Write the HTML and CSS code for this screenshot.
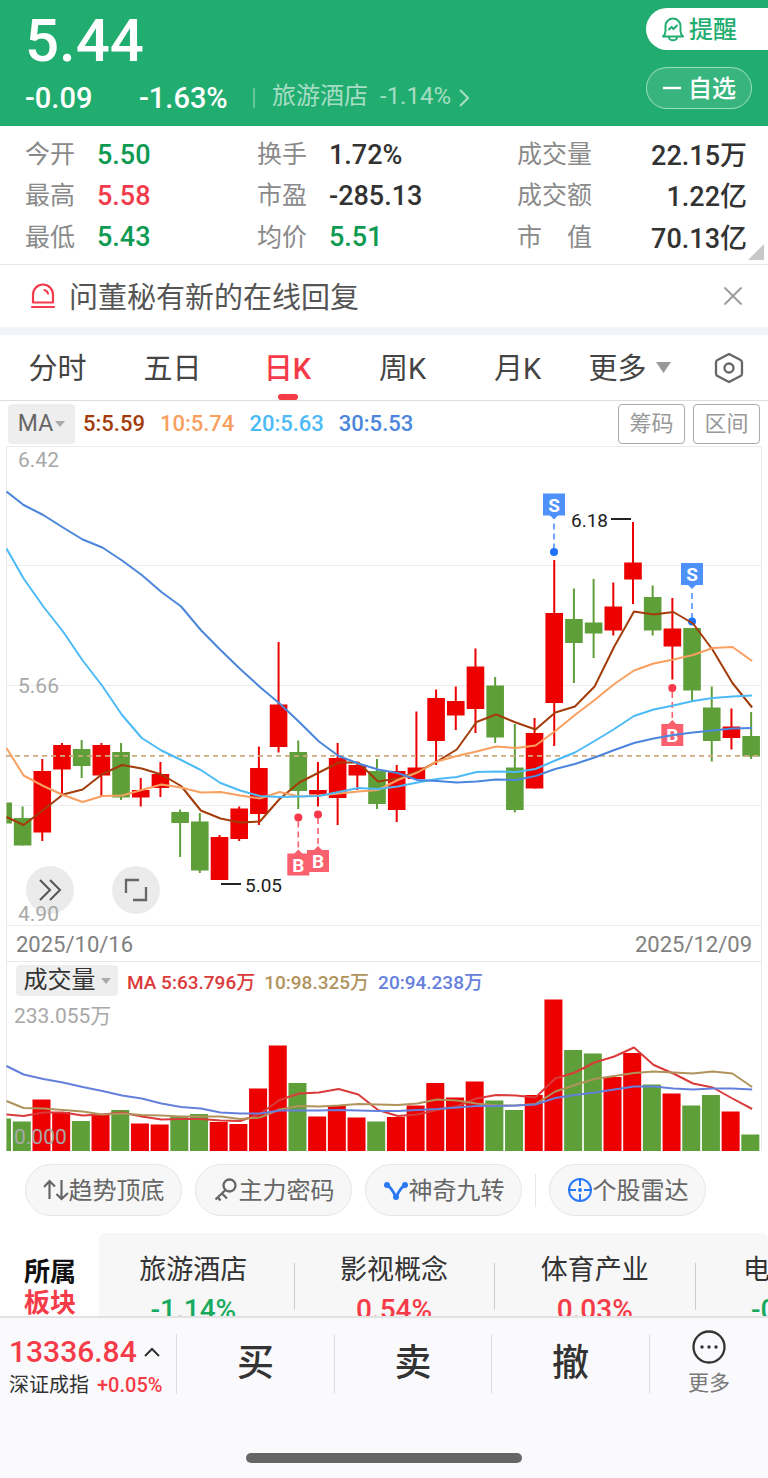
FILE: index.html
```html
<!DOCTYPE html>
<html lang="zh-CN">
<head>
<meta charset="utf-8">
<meta name="viewport" content="width=device-width, initial-scale=1">
<title>个股行情</title>
<link rel="stylesheet" href="styles.css">
</head>
<body>
<div class="app">
  <header class="quote">
    <div class="quote-main">
      <h1 class="price">5.44</h1>
      <div class="changes">
        <span class="change">-0.09</span>
        <span class="change">-1.63%</span>
        <a class="sector-link" href="#sectors"><span>旅游酒店</span><span>-1.14%</span><svg class="chevron" width="10" height="18" viewBox="0 0 10 18"><path d="M1 1l8 8-8 8" fill="none" stroke="currentColor" stroke-width="2"/></svg></a>
      </div>
    </div>
    <div class="quote-actions">
      <button class="pill pill-alert" type="button"><svg width="24" height="26" viewBox="0 0 24 26" fill="none" stroke="currentColor" stroke-width="2" stroke-linecap="round" stroke-linejoin="round"><path d="M4.500 15.500V10a7.500 7.500 0 0 1 15 0v5.500q.3 3 2.500 5H2q2.200-2 2.500-5z"/><path d="M8 21.500a4 2.800 0 0 0 8 0M8 13.500l2.500-2.500 2 2 3.500-3.500"/></svg>提醒</button>
      <button class="pill pill-watch" type="button"><svg width="20" height="20" viewBox="0 0 20 20"><path d="M1 10h18" stroke="currentColor" stroke-width="2.400"/></svg>自选</button>
    </div>
  </header>

  <section class="stats">
    <dl class="stat"><dt>今开</dt><dd class="down">5.50</dd></dl>
    <dl class="stat"><dt>换手</dt><dd>1.72%</dd></dl>
    <dl class="stat stat-end"><dt>成交量</dt><dd>22.15万</dd></dl>
    <dl class="stat"><dt>最高</dt><dd class="up">5.58</dd></dl>
    <dl class="stat"><dt>市盈</dt><dd>-285.13</dd></dl>
    <dl class="stat stat-end"><dt>成交额</dt><dd>1.22亿</dd></dl>
    <dl class="stat"><dt>最低</dt><dd class="down">5.43</dd></dl>
    <dl class="stat"><dt>均价</dt><dd class="down">5.51</dd></dl>
    <dl class="stat stat-end"><dt>市　值</dt><dd>70.13亿</dd></dl>
    <span class="expand-corner"></span>
  </section>

  <section class="notice">
    <svg width="26" height="26" viewBox="0 0 26 26" fill="none" stroke="#f23c4b" stroke-width="2.200" stroke-linecap="round"><path d="M3 19.500V11.500a10 10 0 0 1 20 0v8z" stroke-linejoin="round"/><path d="M2 24h22M14.500 7a5 5 0 0 1 3.500 3.500"/></svg>
    <p class="notice-text">问董秘有新的在线回复</p>
    <button class="close" type="button" aria-label="关闭"><svg width="20" height="20" viewBox="0 0 20 20"><path d="M1.500 1.500l17 17M18.500 1.500l-17 17" stroke="currentColor" stroke-width="1.800"/></svg></button>
  </section>

  <nav class="tabs">
    <button class="tab" type="button">分时</button>
    <button class="tab" type="button">五日</button>
    <button class="tab tab-active" type="button">日K</button>
    <button class="tab" type="button">周K</button>
    <button class="tab" type="button">月K</button>
    <button class="tab tab-more" type="button">更多<svg width="15" height="11" viewBox="0 0 15 11"><path d="M0 0h15L7.500 11z" fill="#999"/></svg></button>
    <button class="tab" type="button" aria-label="设置"><svg width="32" height="32" viewBox="0 0 32 32" fill="none" stroke="#666" stroke-width="2.300" stroke-linejoin="round"><path d="M16 2l11.500 6q1.500 .8 1.500 2.500v11q0 1.700-1.500 2.500L16 30 4.500 24Q3 23.200 3 21.500v-11Q3 8.800 4.500 8z"/><circle cx="16" cy="16" r="4.500"/></svg></button>
  </nav>

  <section class="indicators">
    <button class="indicator-pick" type="button">MA<svg width="10" height="6" viewBox="0 0 10 6"><path d="M0 0h10L5 6z" fill="#aaa"/></svg></button>
    <div class="ma-values"><span class="ma5">5:5.59</span><span class="ma10">10:5.74</span><span class="ma20">20:5.63</span><span class="ma30">30:5.53</span></div>
    <button class="outline" type="button">筹码</button>
    <button class="outline" type="button">区间</button>
  </section>

  <section class="chart-frame">
    <div class="price-chart">
      <svg id="price" class="plot" viewBox="6 446 756 480" role="img" aria-label="日K线图"></svg>
      <button class="float-btn float-next" type="button" aria-label="展开"><svg width="24" height="24" viewBox="0 0 24 24" fill="none" stroke="#555" stroke-width="2"><path d="M2 2l10 10L2 22M12 2l10 10-10 10"/></svg></button>
      <button class="float-btn float-full" type="button" aria-label="全屏"><svg width="24" height="24" viewBox="0 0 24 24" fill="none" stroke="#666" stroke-width="2.300"><path d="M2 15V2h13M22 9v13H9"/></svg></button>
      <span class="axis axis-top">6.42</span>
      <span class="axis axis-mid">5.66</span>
      <span class="axis axis-low">4.90</span>
    </div>
    <div class="dates"><time>2025/10/16</time><time>2025/12/09</time></div>
    <div class="volume-head">
      <button class="volume-pick" type="button">成交量<svg width="10" height="6" viewBox="0 0 10 6"><path d="M0 0h10L5 6z" fill="#aaa"/></svg></button>
      <span class="vol5">MA 5:63.796万</span><span class="vol10">10:98.325万</span><span class="vol20">20:94.238万</span>
    </div>
    <div class="volume-chart">
      <svg id="volume" class="plot" viewBox="6 999 756 153" role="img" aria-label="成交量图"></svg>
      <span class="axis axis-max">233.055万</span>
      <span class="axis axis-zero">0.000</span>
    </div>
  </section>

  <section class="tools">
    <button class="chip" type="button"><svg width="26" height="26" viewBox="0 0 26 26" fill="none" stroke="#666" stroke-width="2.200"><path d="M6.500 22V4M1 10l5.500-6 5.500 5.500M18.500 3v19M25 16l-6.500 6-5-5"/></svg>趋势顶底</button>
    <button class="chip" type="button"><svg width="26" height="26" viewBox="0 0 26 26" fill="none" stroke="#666" stroke-width="2.300"><circle cx="16.500" cy="8.500" r="6"/><path d="M12.500 13L2.500 22.500M9 16.500l5 5M4.500 20l3 3.500"/></svg>主力密码</button>
    <button class="chip" type="button"><svg width="26" height="26" viewBox="0 0 26 26"><path d="M4 8q4 2 9 12 5-10 9-12" fill="none" stroke="#2b78f5" stroke-width="2.800"/><circle cx="4" cy="8" r="3" fill="#2b78f5"/><circle cx="22" cy="8" r="3" fill="#2b78f5"/><circle cx="13" cy="20" r="3" fill="#2b78f5"/></svg>神奇九转</button>
    <span class="tools-rule"></span>
    <button class="chip" type="button"><svg width="26" height="26" viewBox="0 0 26 26" fill="none" stroke="#2b78f5" stroke-width="2"><circle cx="13" cy="13" r="11"/><path d="M13 2v7M13 17v7M2 13h7M17 13h7"/><circle cx="13" cy="13" r="2" fill="#2b78f5" stroke="none"/></svg>个股雷达</button>
  </section>

  <section class="sectors" id="sectors">
    <h2 class="sectors-title">所属<span>板块</span></h2>
    <div class="sector-list">
      <a class="sector" href="#s1"><span>旅游酒店</span><b class="fall">-1.14%</b></a>
      <a class="sector" href="#s2"><span>影视概念</span><b class="rise">0.54%</b></a>
      <a class="sector" href="#s3"><span>体育产业</span><b class="rise">0.03%</b></a>
      <a class="sector sector-cut" href="#s4"><span>电</span><b class="fall">-0</b></a>
    </div>
  </section>

  <footer class="dock">
    <div class="dock-row">
      <a class="index" href="#index">
        <span class="index-value">13336.84<svg width="16" height="10" viewBox="0 0 16 10"><path d="M1 9l7-7 7 7" fill="none" stroke="#333" stroke-width="2"/></svg></span>
        <span class="index-name">深证成指<em>+0.05%</em></span>
      </a>
      <button class="trade" type="button">买</button>
      <button class="trade" type="button">卖</button>
      <button class="trade" type="button">撤</button>
      <button class="more" type="button"><svg width="34" height="34" viewBox="0 0 34 34"><circle cx="17" cy="17" r="15.500" fill="none" stroke="#333" stroke-width="2.300"/><circle cx="10" cy="17" r="1.700" fill="#333"/><circle cx="17" cy="17" r="1.700" fill="#333"/><circle cx="24" cy="17" r="1.700" fill="#333"/></svg>更多</button>
    </div>
    <div class="home-bar"></div>
  </footer>
</div>
<script src="chart.js"></script>
</body>
</html>
```

FILE: styles.css
```css
* { box-sizing: border-box; margin: 0; padding: 0; }

body {
  background: #fff;
  color: #333;
  font-family: Roboto, "Noto Sans CJK SC", sans-serif;
}

button { background: none; border: 0; color: inherit; font: inherit; cursor: pointer; }
a { color: inherit; text-decoration: none; }
svg { flex: none; }

.app { display: flex; flex-direction: column; min-height: 100vh; overflow: hidden; }

/* Quote header */
.quote { display: flex; justify-content: space-between; height: 126px; padding-left: 25px; background: #22ad70; color: #fff; }
.quote-main { display: flex; flex-direction: column; }
.price { height: 80px; font-size: 60px; font-weight: 500; line-height: 82px; }
.changes { display: flex; align-items: center; height: 36px; font-size: 29px; font-weight: 500; }
.change { width: 114px; white-space: nowrap; }
.sector-link { display: flex; align-items: center; gap: 12px; padding-left: 17px; border-left: 2px solid rgba(255, 255, 255, .3); height: 20px; font-size: 24px; font-weight: 400; line-height: 20px; color: rgba(255, 255, 255, .6); white-space: nowrap; }
.sector-link span { padding-bottom: 4px; }
.chevron { margin-left: -4px; }
.quote-actions { display: flex; flex-direction: column; gap: 17px; width: 122px; padding-top: 8px; }
.pill { display: flex; align-items: center; gap: 4px; height: 42px; padding: 0 0 4px 15px; font-size: 24px; font-weight: 500; white-space: nowrap; }
.pill svg, .chip svg, .tab svg { margin-top: 4px; }
.pill-alert { background: #fff; color: #22ad70; border-radius: 21px 0 0 21px; }
.pill-watch { width: 106px; gap: 6px; border: 1px solid rgba(255, 255, 255, .5); border-radius: 21px; background: rgba(255, 255, 255, .1); }

/* Key figures */
.stats { position: relative; display: grid; grid-template-columns: 232fr 260fr 230fr; height: 139px; padding: 7px 21px 7px 25px; border-bottom: 1px solid #e8e8e8; }
.stat { display: flex; align-items: center; }
.stat dt { width: 72px; padding-bottom: 3px; color: #8a8a8a; font-size: 25px; white-space: nowrap; }
.stat dd { padding-top: 2px; font-size: 27px; font-weight: 500; white-space: nowrap; }
.stat-end dd { padding-top: 0; }
.stat-end { justify-content: space-between; }
.down { color: #0e9a51; }
.up { color: #f23c4b; }
.expand-corner { position: absolute; right: 4px; bottom: 4px; border-style: solid; border-width: 0 0 16px 16px; border-color: transparent transparent #c8c8c8; }

/* Notice */
.notice { display: flex; align-items: center; height: 70px; padding: 0 25px 0 30px; border-bottom: 8px solid #f1f3f8; }
.notice-text { flex: 1; margin-left: 13px; padding-top: 3px; color: #555; font-size: 29px; line-height: 40px; }
.close { display: flex; color: #999; }

/* Period tabs */
.tabs { display: grid; grid-template-columns: repeat(6, 115fr) 78fr; height: 66px; border-bottom: 1px solid #ddd; }
.tab { position: relative; display: flex; align-items: center; justify-content: center; padding-bottom: 4px; font-size: 29px; color: #444; white-space: nowrap; }
.tab-more { gap: 9px; padding-right: 6px; }
.tab-active { color: #f63b48; font-weight: 500; }
.tab-active::after { content: ""; position: absolute; bottom: 0; left: calc(50% - 10px); width: 20px; height: 6px; border-radius: 3px; background: #f63b48; }

/* Indicator row */
.indicators { display: flex; align-items: center; gap: 8px; height: 45px; padding: 0 8px; }
.indicator-pick { display: flex; align-items: center; justify-content: center; gap: 2px; width: 67px; height: 40px; border-radius: 4px; background: #eee; color: #666; font-size: 23px; }
.ma-values { display: flex; flex: 1; gap: 15px; font-size: 22px; font-weight: 500; white-space: nowrap; }
.ma5 { color: #a23c0a; }
.ma10 { color: #f9a060; }
.ma20 { color: #4dbaf8; }
.ma30 { color: #4b86dc; }
.outline { width: 67px; height: 40px; border: 1px solid #aaa; border-radius: 4px; color: #999; font-size: 22px; line-height: 36px; }

/* Charts */
.chart-frame { margin: 0 6px; }
.price-chart, .volume-chart { position: relative; }
.plot { display: block; width: 100%; height: auto; }
.plot text { font-size: 19px; fill: #222; }
.plot .badge { font-size: 19px; font-weight: 700; fill: #fff; text-anchor: middle; }
.axis { position: absolute; left: 12px; color: #a8a8a8; font-size: 21px; line-height: 24px; }
.axis-top { top: 2px; }
.axis-mid { top: 228px; }
.axis-low { bottom: 0; }
.axis-max { left: 8px; top: 5px; }
.axis-zero { left: 8px; bottom: 3px; }
.float-btn { position: absolute; bottom: 12px; display: flex; align-items: center; justify-content: center; width: 48px; height: 48px; border-radius: 50%; background: rgba(0, 0, 0, .08); }
.float-next { left: 20px; }
.float-full { left: 106px; }
.dates { display: flex; align-items: center; justify-content: space-between; height: 36px; padding: 2px 9px 0; border: 1px solid #e8e8e8; border-top: 0; color: #808080; font-size: 22px; }
.volume-head { display: flex; align-items: center; gap: 9px; height: 37px; padding-left: 9px; border: solid #e8e8e8; border-width: 0 1px; font-size: 19px; font-weight: 500; white-space: nowrap; }
.volume-pick { display: flex; align-items: center; justify-content: center; gap: 5px; width: 102px; height: 31px; border-radius: 4px; background: #eee; color: #333; font-size: 24px; font-weight: 400; line-height: 31px; }
.vol5 { color: #db3a3a; }
.vol10 { color: #b0935c; }
.vol20 { color: #6480dc; }

/* Tool chips */
.tools { display: flex; align-items: center; gap: 13px; padding: 12px 25px 17px; }
.chip { display: flex; align-items: center; justify-content: center; width: 157px; height: 52px; padding-bottom: 4px; border: 1px solid #e6e6e6; border-radius: 26px; background: #f7f7f7; color: #666; font-size: 24px; white-space: nowrap; }
.tools-rule { width: 1px; height: 33px; background: #e6e6e6; }

/* Related sectors */
.sectors { display: flex; height: 83px; overflow: hidden; }
.sectors-title { flex: none; width: 99px; padding: 24px 0 0 24px; color: #111; font-size: 26px; font-weight: 700; line-height: 31px; }
.sectors-title span { display: block; color: #f63b48; }
.sector-list { display: flex; flex: 1; min-width: 0; overflow: hidden; border-radius: 6px 6px 0 0; background: #f7f7f7; }
.sector { position: relative; display: flex; flex: none; flex-direction: column; align-items: center; width: 30%; padding: 18px 12px 0 0; font-size: 27px; line-height: 39px; white-space: nowrap; }
.sector::after { content: ""; position: absolute; right: 5px; top: 30px; width: 1px; height: 47px; background: #ccc; }
.sector b { font-size: 28px; font-weight: 500; }
.sector-cut { align-items: flex-start; width: 10%; padding-left: 42px; }
.sector-cut::after { content: none; }
.sector-cut b { padding-left: 8px; }
.fall { color: #18ab60; }
.rise { color: #f63b48; }

/* Bottom dock */
.dock { display: flex; flex: 1; flex-direction: column; justify-content: space-between; align-items: center; padding-bottom: 15px; border-top: 2px solid #e2e2e4; background: #fafafc; }
.dock-row { display: grid; grid-template-columns: 177fr 158fr 157fr 158fr 118fr; align-self: stretch; height: 60px; margin-top: 16px; }
.dock-row > * { height: 60px; border-right: 1px solid #ddd; }
.dock-row > :last-child { border-right: 0; }
.index { display: flex; flex-direction: column; padding-left: 9px; white-space: nowrap; }
.index-value { display: flex; align-items: center; gap: 7px; height: 38px; color: #f63b48; font-size: 30px; font-weight: 500; }
.index-name { display: flex; gap: 8px; font-size: 20px; line-height: 32px; }
.index-name em { color: #f63b48; font-style: normal; font-weight: 500; }
.trade { font-size: 37px; font-weight: 500; line-height: 56px; }
.more { display: flex; flex-direction: column; align-items: center; justify-content: center; gap: 4px; color: #777; font-size: 21px; line-height: 30px; }
.home-bar { width: 36%; height: 10px; border-radius: 5px; background: #666; }
```

FILE: chart.js
```js
const RED = "#ec0000";
const GREEN = "#5f9f3a";
const STEP = 19.69;
const FIRST = 22.6;

// direction, wick top, body top, body bottom, wick bottom, volume top
const candles = [
  ["g", 806.5, 818, 845.5, 845.5, 1121.5], ["r", 759, 771, 832.5, 841, 1099.5],
  ["r", 743, 745, 769.5, 795, 1112], ["g", 740, 749, 766, 778, 1121],
  ["r", 743, 745, 775.5, 796, 1114.5], ["g", 743, 752, 797.5, 800, 1110],
  ["r", 778, 790, 797.5, 806.5, 1123.5], ["r", 762, 774, 788, 797, 1124.5],
  ["g", 809.5, 812, 823, 857, 1116.5], ["g", 813, 821.5, 870.5, 873, 1114],
  ["r", 835, 837, 880, 880, 1122], ["r", 806.5, 808.5, 839, 841, 1124],
  ["r", 746.5, 768, 814, 825, 1088.5], ["r", 642, 704.5, 747, 752.5, 1045.5],
  ["g", 740.5, 752, 791, 809, 1083], ["r", 762, 790, 794.5, 806.5, 1116.5],
  ["r", 743, 758, 798, 825, 1105.5], ["r", 764, 765, 775.5, 790, 1117.5],
  ["g", 759, 771, 804, 809, 1121.5], ["r", 765, 771, 810, 822, 1117],
  ["r", 711.5, 767.5, 779, 779, 1105.5], ["r", 689.5, 698, 741, 765, 1083],
  ["r", 686.5, 701, 715.5, 730, 1097.5], ["r", 648.5, 666.5, 709, 733, 1081.5],
  ["g", 677, 685.5, 737.5, 743, 1100.5], ["g", 724, 767.5, 810, 812.5, 1110],
  ["r", 718, 733, 788.5, 788.5, 1095], ["r", 560, 613, 703, 746, 999.5],
  ["g", 588.5, 619, 643, 683, 1050], ["g", 579, 622.5, 633.5, 658, 1053.5],
  ["r", 582.5, 606.5, 630.5, 635.5, 1077], ["r", 522, 562.5, 579.5, 604, 1053],
  ["g", 585.5, 597, 630.5, 635.5, 1084.5], ["r", 598, 628.5, 646.5, 679.5, 1093.5],
  ["g", 628, 628, 690.5, 701, 1105.5], ["g", 686.5, 707.5, 741, 761.5, 1095],
  ["r", 708.5, 726.5, 738, 749.5, 1111.5], ["g", 712, 736, 756.5, 759, 1134.5]
];

const priceLines = [
  ["#a23c0a", [817, 825, 810, 794.5, 789.5, 774, 765, 768.5, 774.5, 786, 810.5, 818.5, 822.5, 821.5, 799, 782.5, 772.5, 762.5, 762.5, 781.5, 778.5, 772, 761.5, 749.5, 722, 714.5, 722.5, 729.5, 712.5, 706.5, 686.5, 646.5, 611.5, 614.5, 612, 623.5, 650, 683, 707.5]],
  ["#f9a060", [748, 775.5, 786, 795, 802, 796, 795.5, 790, 784.5, 787.5, 792.5, 792, 795.5, 798.5, 792, 796.5, 795.5, 793.5, 791.5, 790, 780, 772.5, 761.5, 756, 751.5, 746.5, 748, 745.5, 731, 715, 700, 684, 670.5, 663.5, 659.5, 655, 648, 647, 661]],
  ["#4dbaf8", [548.5, 578.5, 606.5, 631.5, 660.5, 686, 715, 738, 750.5, 760, 770, 783, 790.5, 796, 797, 796.5, 796, 792, 788, 789, 786.5, 782.5, 779, 777, 772, 771.5, 772, 769, 760.5, 752.5, 741, 729, 716, 709.5, 705.5, 701, 698, 696.5, 695.5]],
  ["#4b86dc", [491.5, 505, 515, 527.5, 539.5, 547.5, 560.5, 575, 592, 606.5, 630, 650, 669, 687, 703.5, 722, 741.5, 756, 763.5, 769.5, 773, 780, 781, 782.5, 781.5, 779.5, 780, 776, 769, 764, 757.5, 750, 743, 738.5, 735, 732.5, 730.5, 728.5, 728]]
];

const volumeLines = [
  ["#db3a3a", [1114.5, 1116, 1112.5, 1112.5, 1115.5, 1114.5, 1112.5, 1116.5, 1119.5, 1119, 1119, 1120.5, 1121, 1114, 1100, 1093.5, 1092.5, 1089, 1094.5, 1110, 1116, 1114.5, 1110, 1106.5, 1098.5, 1095, 1095.5, 1097.5, 1078.5, 1072.5, 1062.5, 1056.5, 1047.5, 1065, 1073.5, 1083.5, 1087.5, 1098.5, 1109]],
  ["#b0935c", [1101, 1108, 1108.5, 1110, 1111.5, 1114.5, 1113.5, 1115, 1115.5, 1116.5, 1116.5, 1116.5, 1119, 1117.5, 1109.5, 1106, 1106.5, 1105.5, 1104, 1104.5, 1105, 1103.5, 1099.5, 1100.5, 1103.5, 1105.5, 1105.5, 1104, 1091.5, 1085, 1079, 1076, 1073, 1071.5, 1072.5, 1073.5, 1071.5, 1073.5, 1087]],
  ["#6480dc", [1066, 1074.5, 1079, 1082.5, 1087, 1091, 1095.5, 1098.5, 1103.5, 1107, 1108.5, 1112.5, 1113.5, 1113.5, 1110.5, 1110.5, 1110.5, 1110, 1110.5, 1111, 1111, 1110, 1109, 1107.5, 1106, 1106, 1105.5, 1104.5, 1098, 1095, 1092.5, 1089.5, 1086.5, 1086.5, 1088.5, 1089.5, 1088.5, 1088.5, 1089.5]]
];

const centre = i => FIRST + STEP * i;
const rect = (x, y, w, h, fill) => `<rect x="${x}" y="${y}" width="${w}" height="${h}" fill="${fill}"/>`;
const line = (x1, y1, x2, y2, stroke, extra = "") => `<line x1="${x1}" y1="${y1}" x2="${x2}" y2="${y2}" stroke="${stroke}" ${extra}/>`;
const curve = ([stroke, ys]) => {
  const points = ys.map((y, i) => `${i ? centre(i - 1) + 1 : 6.5},${y}`).join(" ");
  return `<polyline points="${points}" fill="none" stroke="${stroke}" stroke-width="2" stroke-linejoin="round"/>`;
};

// Trade marker: a dot on the candle joined to a lettered flag.
function marker(letter, x, dotY, boxY) {
  const sell = letter === "S";
  const fill = sell ? "#4f91fb" : "#f8616d";
  const dot = sell ? "#1f73fa" : "#f6384a";
  const tip = sell ? `M${x - 5} ${boxY + 21}l5 5 5-5z` : `M${x - 5} ${boxY + 1}l5-5 5 5z`;
  const from = sell ? boxY + 30 : boxY - 6;
  return line(x, from, x, dotY, fill, 'stroke-width="1.6" stroke-dasharray="6 4"')
    + `<circle cx="${x}" cy="${dotY}" r="4" fill="${dot}"/>`
    + rect(x - 11, boxY, 22, 22, fill) + `<path d="${tip}" fill="${fill}"/>`
    + `<text class="badge" x="${x}" y="${boxY + 18}">${letter}</text>`;
}

let price = "";
for (const y of [446.5, 565.5, 685.5, 805.5, 925.5]) price += line(6, y, 762, y, "#ececec");
for (const x of [6.5, 761.5]) price += line(x, 446, x, 926, "#e8e8e8");
price += rect(6.5, 802.5, 5.5, 21, GREEN);
candles.forEach(([dir, high, top, bottom, low], i) => {
  const color = dir === "r" ? RED : GREEN;
  price += line(centre(i), high, centre(i), low, color, 'stroke-width="2"')
    + rect(centre(i) - 8.8, top, 17.6, bottom - top, color);
});
price += line(6, 755.8, 762, 755.8, "#cdab7c", 'stroke-width="1.8" stroke-dasharray="5 4"');
price += marker("S", 554, 552, 493.5) + marker("S", 692, 621.5, 563)
  + marker("B", 298.3, 817.5, 853.5) + marker("B", 318, 814.5, 850) + marker("B", 672.3, 688, 724);
price += priceLines.map(curve).join("");
price += line(611, 519, 631, 519, "#222", 'stroke-width="2"') + '<text x="571" y="527">6.18</text>';
price += line(221, 884, 241, 884, "#222", 'stroke-width="2"') + '<text x="245" y="892">5.05</text>';
document.getElementById("price").innerHTML = price;

let volume = "";
for (const x of [6.5, 761.5]) volume += line(x, 999, x, 1151, "#e8e8e8");
volume += rect(6.5, 1118.5, 4.5, 32.5, GREEN);
candles.forEach(([dir, , , , , top], i) => {
  volume += rect(centre(i) - 9.8, top, 18, 1151 - top, dir === "r" ? RED : GREEN);
});
volume += volumeLines.map(curve).join("");
document.getElementById("volume").innerHTML = volume;
```
